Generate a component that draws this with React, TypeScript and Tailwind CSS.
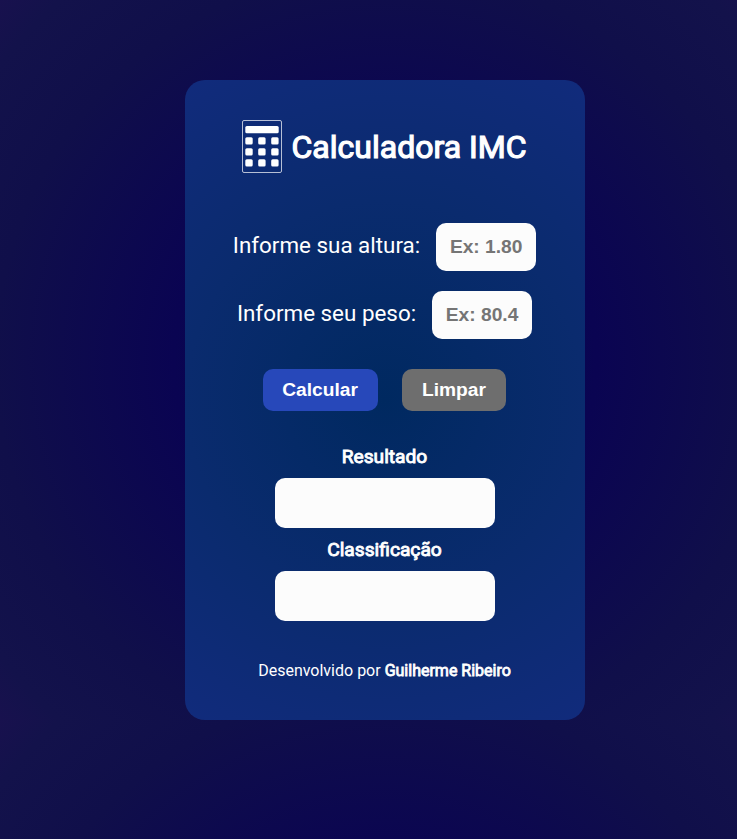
export default function App() {
  return (
    <main className="flex h-[839px] w-[737px] overflow-hidden bg-[radial-gradient(circle_at_385px_360px,#001540_0px,#0a0452_211px,#100f4a_390px,#13124b_485px,#18114e_527px)] bg-[length:770px_720px] pt-20 pl-[185px] font-['Roboto',sans-serif] text-white">
      <section className="flex h-[640px] w-[400px] shrink-0 flex-col items-center rounded-[20px] bg-[radial-gradient(circle,#002960_0px,#0a2b6e_200px,#112b7c_377px)] pt-10">
        <header className="mr-0.5 flex h-[53px] items-center gap-[10px]">
          <svg width="40" height="53" viewBox="0 0 40 53" fill="white">
            <rect x="0.5" y="0.5" width="39" height="52" rx="1.5" fill="none" stroke="white" strokeOpacity="0.7" />
            <rect x="3.3" y="6" width="33.4" height="7.3" rx="1.5" />
            {[17.3, 28.3, 39.3].map((y) =>
              [3.3, 16.2, 29.2].map((x) => <rect key={`${x}-${y}`} x={x} y={y} width="7.4" height="7.3" rx="1.5" />),
            )}
          </svg>
          <h1 className="mt-px text-[32px] leading-[38px] font-normal [-webkit-text-stroke:1.2px_white]">Calculadora IMC</h1>
        </header>
        <div className="mt-[50px] mr-px flex h-12 items-center gap-4">
          <label className="-mt-1 text-[22.4px] leading-[26px]" htmlFor="altura">Informe sua altura:</label>
          <input id="altura" placeholder="Ex: 1.80" className="h-12 w-[100px] rounded-[10px] bg-[#fcfcfc] text-center font-['Liberation_Sans',sans-serif] text-[19.2px] font-bold text-black placeholder:text-[#757575]" />
        </div>
        <div className="mt-5 mr-px flex h-12 items-center gap-4">
          <label className="-mt-1 text-[22.4px] leading-[26px]" htmlFor="peso">Informe seu peso:</label>
          <input id="peso" placeholder="Ex: 80.4" className="h-12 w-[100px] rounded-[10px] bg-[#fcfcfc] text-center font-['Liberation_Sans',sans-serif] text-[19.2px] font-bold text-black placeholder:text-[#757575]" />
        </div>
        <div className="mt-[30px] mr-0.5 flex gap-6 font-['Liberation_Sans',sans-serif] text-[19.2px] font-bold">
          <button className="h-[42px] w-[115px] rounded-[10px] bg-[#2748ba]">Calcular</button>
          <button className="h-[42px] w-[104px] rounded-[10px] bg-[#6e6e6e] pl-px">Limpar</button>
        </div>
        <h2 className="mt-[34px] mr-px text-[19.2px] leading-[23px] font-normal [-webkit-text-stroke:0.9px_white]">Resultado</h2>
        <div className="mt-[10px] h-[50px] w-[220px] rounded-[10px] bg-[#fcfcfc]" />
        <h2 className="mt-[10px] mr-px text-[19.2px] leading-[23px] font-normal [-webkit-text-stroke:0.9px_white]">Classificação</h2>
        <div className="mt-[10px] h-[50px] w-[220px] rounded-[10px] bg-[#fcfcfc]" />
        <p className="mt-10 mr-px text-[16px] leading-[19px]">Desenvolvido por <strong className="font-normal [-webkit-text-stroke:0.8px_white]">Guilherme Ribeiro</strong></p>
      </section>
    </main>
  );
}
